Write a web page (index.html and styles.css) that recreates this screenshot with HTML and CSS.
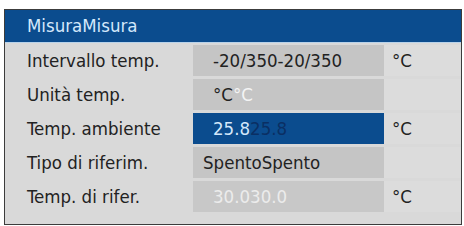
FILE: index.html
```html
<!DOCTYPE html>
<html lang="it">

<head>
  <meta charset="UTF-8">
  <title>Misura</title>
  <link rel="stylesheet" href="styles.css">
</head>

<body>

  <div class="panel">
    <div class="panel-title">MisuraMisura</div>

    <div class="rows">
      <div class="row">
        <div class="label">Intervallo temp.</div>
        <div class="value">-20/350-20/350</div>
        <div class="unit">°C</div>
      </div>

      <div class="row">
        <div class="label">Unità temp.</div>
        <div class="value"><span>°C</span><span class="ghost">°C</span></div>
        <div class="unit"></div>
      </div>

      <div class="row">
        <div class="label">Temp. ambiente</div>
        <div class="value selected"><span>25.8</span><span class="ghost">25.8</span></div>
        <div class="unit">°C</div>
      </div>

      <div class="row">
        <div class="label">Tipo di riferim.</div>
        <div class="value choice">SpentoSpento</div>
        <div class="unit"></div>
      </div>

      <div class="row">
        <div class="label">Temp. di rifer.</div>
        <div class="value disabled">30.030.0</div>
        <div class="unit">°C</div>
      </div>
    </div>
  </div>

</body>

</html>
```

FILE: styles.css
```css
/* Measurement panel */

body {
  margin: 0;
  padding: 9px 2px 0 4px;
  background-color: #fff;
  font-family: "DejaVu Sans Condensed", Roboto, sans-serif;
  font-size: 18.5px;
}

.panel {
  width: 456px;
  height: 214px;
  border: 1px solid #3c3c3c;
  background-color: #d9d9d9;
}

.panel-title {
  height: 32px;
  line-height: 31px;
  padding-left: 22px;
  background-color: #0b4c8e;
  color: #d4e8fb;
  border-bottom: 1px solid #b9d3ea;
}

.rows {
  display: flex;
  flex-direction: column;
  gap: 3px;
  padding-top: 2px;
}

.row {
  display: grid;
  grid-template-columns: 188px 191px 1fr;
  height: 31px;
  line-height: 31px;
  color: #222;
}

.label {
  padding-left: 22px;
}

.value {
  background-color: #c5c5c5;
  padding-left: 20px;
  white-space: nowrap;
}

.value.choice {
  padding-left: 10px;
}

.value .ghost {
  color: #f4f4f4;
}

.value.selected {
  background-color: #0b4c8e;
  color: #d4e8fb;
}

.value.selected .ghost {
  color: #0a2f63;
}

.value.disabled {
  background-color: #c8c8c8;
  color: #ececec;
}

.unit {
  padding-left: 8px;
  background-color: #dcdcdc;
}
```
